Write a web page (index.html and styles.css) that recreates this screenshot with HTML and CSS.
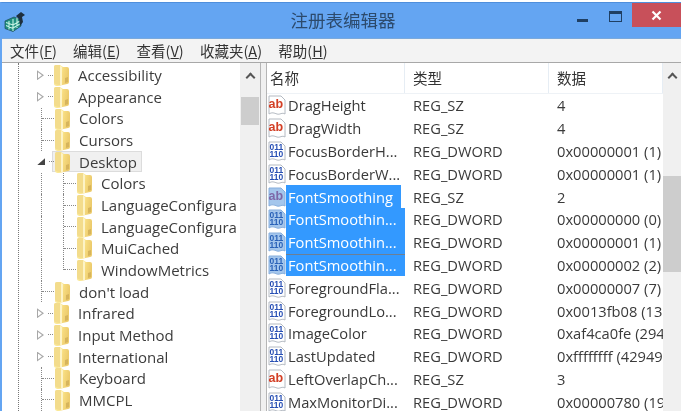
FILE: index.html
```html
<!DOCTYPE html>
<html lang="zh-CN">
<head>
<meta charset="utf-8">
<title>注册表编辑器</title>
<link rel="stylesheet" href="styles.css">
</head>
<body>
<svg class="defs" width="0" height="0" aria-hidden="true">
  <defs>
    <linearGradient id="fg" x1="0" y1="0" x2="1" y2="0.25">
      <stop offset="0" stop-color="#f8e7a0"/>
      <stop offset="0.5" stop-color="#fbe995"/>
      <stop offset="0.62" stop-color="#f7dc80"/>
      <stop offset="1" stop-color="#eccb6c"/>
    </linearGradient>
    <symbol id="folder" viewBox="0 0 17 22">
      <path d="M1 3q0-2 2-2h4l3 2h4q2 0 2 2v13q0 2-2 2l-9 2q-4 0-4-2z" fill="url(#fg)"/>
      <path d="M1 3q0-2 2-2h4v20q-6 0-6-3z" fill="#f3dc8c"/>
      <path d="M7 2l2 1v18l-2 0z" fill="#fdf3c6"/>
      <path d="M12 14l3-1v5l-3 1z" fill="#d6b45c"/>
    </symbol>
    <symbol id="ab" viewBox="0 0 18 20">
      <path d="M1 1h12l4 4v14c-3-2-5 1-8 0s-5-2-8 0z" fill="#fff" stroke="#b4bac2"/>
      <text x="0.500" y="12.500" class="abtext">ab</text>
    </symbol>
    <symbol id="bin" viewBox="0 0 18 20">
      <path d="M1 1h12l4 4v14c-3-2-5 1-8 0s-5-2-8 0z" fill="#fff" stroke="#b4bac2"/>
      <text x="1.500" y="8.500" class="bintext">011</text>
      <text x="1.500" y="15.500" class="bintext">110</text>
    </symbol>
    <symbol id="absel" viewBox="0 0 18 20">
      <path d="M1 1h12l4 4v14c-3-2-5 1-8 0s-5-2-8 0z" fill="#a4c6ec" stroke="#86aedd"/>
      <text x="0.500" y="12.500" class="abtext seltext">ab</text>
    </symbol>
    <symbol id="binsel" viewBox="0 0 18 20">
      <path d="M1 1h12l4 4v14c-3-2-5 1-8 0s-5-2-8 0z" fill="#a4c6ec" stroke="#86aedd"/>
      <text x="1.500" y="8.500" class="bintext seltext2">011</text>
      <text x="1.500" y="15.500" class="bintext seltext2">110</text>
    </symbol>
  </defs>
</svg>
<div class="window">
  <header class="titlebar">
    <div class="appicon">
      <svg width="22" height="20" viewBox="0 0 22 20">
        <path d="M1 9l9-4 7 3v6l-8 5.500-8-3z" fill="#1f8f80" stroke="#1e4a50" stroke-width=".7"/>
        <path d="M2 10.500l7 2.500M2 13.500l7 3M5 9v8.500M9 7v12M13 6v10M9 13l7-4M9 16l7-4" stroke="#c4f2e2" stroke-width="1.100" fill="none"/>
        <path d="M12 4l5-4 4 3-3 2 1 5-3 4-1-7z" fill="#1e2f3e"/>
      </svg>
    </div>
    <div class="title">注册表编辑器</div>
    <div class="controls">
      <span class="min"></span>
      <span class="max"></span>
      <span class="close">
        <svg width="11" height="11" viewBox="0 0 11 11"><path d="M1.500 1.500l8 8M9.500 1.500l-8 8" stroke="#fff" stroke-width="2.200"/></svg>
      </span>
    </div>
  </header>
  <nav class="menubar">
    <span>文件(<u>F</u>)</span>
    <span>编辑(<u>E</u>)</span>
    <span>查看(<u>V</u>)</span>
    <span>收藏夹(<u>A</u>)</span>
    <span>帮助(<u>H</u>)</span>
  </nav>
  <main class="panes">
    <section class="treepane">
      <div class="tree">
        <div class="row"><i class="exp"></i><i class="stub short"></i><svg class="folder"><use href="#folder"/></svg><span class="label">Accessibility</span></div>
        <div class="row"><i class="exp"></i><i class="stub short"></i><svg class="folder"><use href="#folder"/></svg><span class="label">Appearance</span></div>
        <div class="row"><i class="stub"></i><svg class="folder"><use href="#folder"/></svg><span class="label">Colors</span></div>
        <div class="row"><i class="stub"></i><svg class="folder"><use href="#folder"/></svg><span class="label">Cursors</span></div>
        <div class="row"><i class="exp open"></i><i class="stub short"></i><div class="selected"><svg class="folder"><use href="#folder"/></svg><span class="label">Desktop</span></div></div>
        <div class="row sub"><i class="stub"></i><svg class="folder"><use href="#folder"/></svg><span class="label">Colors</span></div>
        <div class="row sub"><i class="stub"></i><svg class="folder"><use href="#folder"/></svg><span class="label">LanguageConfigura</span></div>
        <div class="row sub"><i class="stub"></i><svg class="folder"><use href="#folder"/></svg><span class="label">LanguageConfigura</span></div>
        <div class="row sub"><i class="stub"></i><svg class="folder"><use href="#folder"/></svg><span class="label">MuiCached</span></div>
        <div class="row sub last"><i class="stub"></i><svg class="folder"><use href="#folder"/></svg><span class="label">WindowMetrics</span></div>
        <div class="row"><i class="stub"></i><svg class="folder"><use href="#folder"/></svg><span class="label">don't load</span></div>
        <div class="row"><i class="exp"></i><i class="stub short"></i><svg class="folder"><use href="#folder"/></svg><span class="label">Infrared</span></div>
        <div class="row"><i class="exp"></i><i class="stub short"></i><svg class="folder"><use href="#folder"/></svg><span class="label">Input Method</span></div>
        <div class="row"><i class="exp"></i><i class="stub short"></i><svg class="folder"><use href="#folder"/></svg><span class="label">International</span></div>
        <div class="row"><i class="stub"></i><svg class="folder"><use href="#folder"/></svg><span class="label">Keyboard</span></div>
        <div class="row"><i class="stub"></i><svg class="folder"><use href="#folder"/></svg><span class="label">MMCPL</span></div>
      </div>
      <div class="scrollbar treebar"><i class="chev"></i><i class="thumb"></i></div>
    </section>
    <section class="listpane">
      <div class="list">
        <div class="head"><span>名称</span><span>类型</span><span>数据</span></div>
        <div class="item"><div class="name"><svg class="ico"><use href="#ab"/></svg><span class="nm">DragHeight</span></div><span>REG_SZ</span><span>4</span></div>
        <div class="item"><div class="name"><svg class="ico"><use href="#ab"/></svg><span class="nm">DragWidth</span></div><span>REG_SZ</span><span>4</span></div>
        <div class="item"><div class="name"><svg class="ico"><use href="#bin"/></svg><span class="nm">FocusBorderH...</span></div><span>REG_DWORD</span><span>0x00000001 (1)</span></div>
        <div class="item"><div class="name"><svg class="ico"><use href="#bin"/></svg><span class="nm">FocusBorderW...</span></div><span>REG_DWORD</span><span>0x00000001 (1)</span></div>
        <div class="item"><div class="name"><svg class="ico"><use href="#absel"/></svg><span class="nm on first">FontSmoothing</span></div><span>REG_SZ</span><span>2</span></div>
        <div class="item"><div class="name"><svg class="ico"><use href="#binsel"/></svg><span class="nm on">FontSmoothin...</span></div><span>REG_DWORD</span><span>0x00000000 (0)</span></div>
        <div class="item"><div class="name"><svg class="ico"><use href="#binsel"/></svg><span class="nm on">FontSmoothin...</span></div><span>REG_DWORD</span><span>0x00000001 (1)</span></div>
        <div class="item"><div class="name"><svg class="ico"><use href="#binsel"/></svg><span class="nm on focus">FontSmoothin...</span></div><span>REG_DWORD</span><span>0x00000002 (2)</span></div>
        <div class="item"><div class="name"><svg class="ico"><use href="#bin"/></svg><span class="nm">ForegroundFla...</span></div><span>REG_DWORD</span><span>0x00000007 (7)</span></div>
        <div class="item"><div class="name"><svg class="ico"><use href="#bin"/></svg><span class="nm">ForegroundLo...</span></div><span>REG_DWORD</span><span>0x0013fb08 (13</span></div>
        <div class="item"><div class="name"><svg class="ico"><use href="#bin"/></svg><span class="nm">ImageColor</span></div><span>REG_DWORD</span><span>0xaf4ca0fe (294</span></div>
        <div class="item"><div class="name"><svg class="ico"><use href="#bin"/></svg><span class="nm">LastUpdated</span></div><span>REG_DWORD</span><span>0xffffffff (42949</span></div>
        <div class="item"><div class="name"><svg class="ico"><use href="#ab"/></svg><span class="nm">LeftOverlapCh...</span></div><span>REG_SZ</span><span>3</span></div>
        <div class="item"><div class="name"><svg class="ico"><use href="#bin"/></svg><span class="nm">MaxMonitorDi...</span></div><span>REG_DWORD</span><span>0x00000780 (19</span></div>
      </div>
      <div class="scrollbar listbar"><i class="chev"></i><i class="thumb"></i></div>
    </section>
  </main>
</div>
</body>
</html>
```
FILE: styles.css
```css
* { box-sizing: border-box; }
html, body { margin: 0; height: 411px; overflow: hidden; background: #fff; }
body { font-family: "Open Sans", "Noto Sans CJK SC", sans-serif; color: #3a3a3a; padding-top: 2px; }
.defs { position: absolute; }
.abtext { font: 700 12.500px "Liberation Sans", sans-serif; fill: #d33f25; }
.bintext { font: 700 8.500px "Liberation Sans", sans-serif; fill: #274fb4; }
.seltext { fill: #7d68a8; }
.seltext2 { fill: #2a62b8; }

.window { height: 409px; border-top: 1px solid #4f8fdc; border-left: 2px solid #64a5f2; background: #f0f0f0; display: flex; flex-direction: column; filter: blur(.4px); }

.titlebar { height: 36px; flex: none; background: #64a5f2; display: grid; grid-template-columns: 1fr auto 1fr; border-bottom: 1px solid #7aa9dc; }
.appicon { padding: 9px 0 0 2px; }
.title { font: 17.500px/1 "Noto Sans CJK SC", sans-serif; color: #2c4a6c; padding: 8px 0 0 3px; }
.controls { display: flex; justify-content: flex-end; align-items: flex-start; }
.min { width: 11px; height: 3px; background: #1f3f63; margin: 16px 0 0; }
.max { width: 13px; height: 11px; border: 1.500px solid #1f3f63; border-top-width: 3px; margin: 8px 0 0 21px; }
.close { width: 49px; height: 24px; background: #c8505a; margin-left: 10px; display: flex; align-items: center; justify-content: center; }

.menubar { height: 24px; flex: none; display: flex; background: #f3f3f3; font: 14.500px/23px "Noto Sans CJK SC", sans-serif; color: #333; padding-left: 8px; gap: 16.200px; border-bottom: 1px solid #a8a8a8; }

.panes { flex: 1; min-height: 0; display: flex; gap: 5px; background: #f0f0f0; }
.treepane { width: 259px; flex: none; display: flex; background: #fff; border-right: 1px solid #b5b5b5; overflow: hidden; }
.listpane { flex: 1; min-width: 0; display: flex; background: #fff; border-left: 1px solid #b5b5b5; overflow: hidden; }

.tree { flex: 1; min-width: 0; padding-top: 1.400px; position: relative; overflow: hidden; }
.tree::before { content: ""; position: absolute; left: 16px; top: 0; bottom: 0; border-left: 1px dotted #777; }
.row { height: 21.650px; display: flex; align-items: center; padding-left: 34px; position: relative; white-space: nowrap; font-size: 15px; }
.row::before { content: ""; position: absolute; left: 39px; top: 0; bottom: 0; border-left: 1px dotted #888; }
.row:has(.exp)::before { display: none; }
.exp { width: 7px; height: 10px; flex: none; margin-left: 1px; position: relative; clip-path: polygon(0 0, 100% 50%, 0 100%); background: #a8a8a8; }
.exp::after { content: ""; position: absolute; left: 1px; top: 2px; width: 4px; height: 6px; background: #fff; clip-path: polygon(0 0, 100% 50%, 0 100%); }
.exp.open { width: 8px; height: 7px; background: #444; clip-path: polygon(100% 0, 100% 100%, 0 100%); }
.exp.open::after { display: none; }
.stub { display: block; flex: none; height: 0; border-top: 1px dotted #888; width: 12px; margin-left: 6px; position: relative; }
.stub.short { width: 5px; margin-left: 4px; }
.folder { width: 17px; height: 22px; flex: none; position: relative; }
.label { margin-left: 8px; color: #3c3c3c; }
.selected { display: flex; align-items: center; height: 21px; background: #f0f0f0; border: 1px solid #dcdcdc; padding: 0 4px 0 1px; margin-left: -2px; flex: none; }
.row.sub { padding-left: 57px; }
.row.sub .stub { margin-left: 5px; width: 12px; }
.row.sub::after { content: ""; position: absolute; left: 61px; top: 0; bottom: 0; border-left: 1px dotted #888; }
.row.sub.last::after { bottom: 50%; }

.scrollbar { flex: none; background: #f0f0f0; display: flex; flex-direction: column; align-items: center; }
.treebar { width: 20px; }
.listbar { width: 18px; }
.chev { display: block; flex: none; width: 7px; height: 7px; border-left: 2px solid #555; border-top: 2px solid #555; transform: rotate(45deg); margin-top: 11px; }
.thumb { display: block; width: 18px; background: #cdcdcd; }
.treebar .thumb { height: 28px; margin-top: 16px; }
.listbar .thumb { height: 96px; margin-top: 95px; }

.list { flex: 1; min-width: 0; overflow: hidden; }
.head, .item { display: grid; grid-template-columns: 138px 144px 114px; white-space: nowrap; }
.head { height: 31px; align-items: center; font: 14.500px/1 "Noto Sans CJK SC", sans-serif; color: #333; border-bottom: 1px solid #eef2f6; }
.head span { padding-left: 3px; height: 100%; display: flex; align-items: center; border-right: 1px solid #e6edf4; }
.head span + span { padding-left: 8px; }
.item { height: 22.800px; align-items: center; font-size: 14.700px; }
.item > span { padding-left: 8px; overflow: hidden; }
.name { display: flex; align-items: center; height: 100%; padding-left: 1px; }
.ico { width: 18px; height: 20px; flex: none; }
.nm { margin-left: 0; padding: 0 2px; height: 100%; display: flex; align-items: center; }
.nm.on { background: #3399ff; color: #fff; width: 120px; }
.nm.first { width: 115px; }
.nm.focus { box-shadow: inset 0 1px 0 #6d7f93; }
```
